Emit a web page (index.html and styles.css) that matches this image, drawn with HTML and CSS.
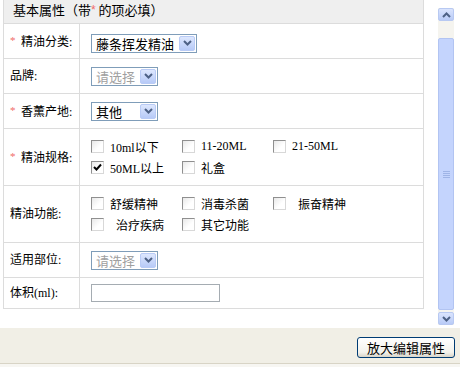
FILE: index.html
```html
<!DOCTYPE html>
<html>

<head>
	<title>基本属性</title>
	<link rel="stylesheet" href="styles.css">
</head>

<body>
	<div class="panel">
		<div class="sheet">
			<table class="form">
				<colgroup>
					<col class="c1">
					<col>
				</colgroup>
				<tr class="head">
					<td colspan="2">基本属性（带<span class="req-h">*</span> 的项必填）</td>
				</tr>
				<tr class="row">
					<td class="label"><span class="req">*</span>精油分类:</td>
					<td class="value push">
						<div class="select wide"><span class="val">藤条挥发精油</span><span class="arrow"><svg width="9" height="6" viewBox="0 0 9 6"><polyline points="1,1 4.5,4.5 8,1" fill="none" stroke="#4d6185" stroke-width="2"/></svg></span></div>
					</td>
				</tr>
				<tr class="row">
					<td class="label">品牌:</td>
					<td class="value">
						<div class="select narrow"><span class="val muted">请选择</span><span class="arrow"><svg width="9" height="6" viewBox="0 0 9 6"><polyline points="1,1 4.5,4.5 8,1" fill="none" stroke="#4d6185" stroke-width="2"/></svg></span></div>
					</td>
				</tr>
				<tr class="row">
					<td class="label"><span class="req">*</span>香薰产地:</td>
					<td class="value">
						<div class="select narrow"><span class="val">其他</span><span class="arrow"><svg width="9" height="6" viewBox="0 0 9 6"><polyline points="1,1 4.5,4.5 8,1" fill="none" stroke="#4d6185" stroke-width="2"/></svg></span></div>
					</td>
				</tr>
				<tr class="row tall">
					<td class="label"><span class="req">*</span>精油规格:</td>
					<td class="value">
						<div class="checks">
							<label class="check"><span class="box"></span>10ml以下</label>
							<label class="check"><span class="box"></span>11-20ML</label>
							<label class="check"><span class="box"></span>21-50ML</label>
							<label class="check"><span class="box on"><svg width="11" height="11" viewBox="0 0 11 11"><polyline points="2,5 4.5,7.5 9,2.5" fill="none" stroke="#000" stroke-width="2"/></svg></span>50ML以上</label>
							<label class="check"><span class="box"></span>礼盒</label>
						</div>
					</td>
				</tr>
				<tr class="row tall">
					<td class="label">精油功能:</td>
					<td class="value">
						<div class="checks">
							<label class="check"><span class="box"></span>舒缓精神</label>
							<label class="check"><span class="box"></span>消毒杀菌</label>
							<label class="check"><span class="box"></span>&nbsp;&nbsp;振奋精神</label>
							<label class="check"><span class="box"></span>&nbsp;&nbsp;治疗疾病</label>
							<label class="check"><span class="box"></span>其它功能</label>
						</div>
					</td>
				</tr>
				<tr class="row">
					<td class="label">适用部位:</td>
					<td class="value">
						<div class="select narrow"><span class="val muted">请选择</span><span class="arrow"><svg width="9" height="6" viewBox="0 0 9 6"><polyline points="1,1 4.5,4.5 8,1" fill="none" stroke="#4d6185" stroke-width="2"/></svg></span></div>
					</td>
				</tr>
				<tr class="row short">
					<td class="label">体积(ml):</td>
					<td class="value">
						<input type="text" class="text">
					</td>
				</tr>
			</table>
		</div>
		<div class="scroll">
			<div class="sb-btn"><svg width="9" height="6" viewBox="0 0 9 6"><polyline points="1,5 4.5,1.5 8,5" fill="none" stroke="#4d6185" stroke-width="2"/></svg></div>
			<div class="sb-track"></div>
			<div class="sb-thumb"><svg width="7" height="7" viewBox="0 0 7 7"><path d="M0 0.5H7M0 2.5H7M0 4.5H7M0 6.5H7" stroke="#9fb4e6" stroke-width="1"/></svg></div>
			<div class="sb-gap"></div>
			<div class="sb-btn"><svg width="9" height="6" viewBox="0 0 9 6"><polyline points="1,1 4.5,4.5 8,1" fill="none" stroke="#4d6185" stroke-width="2"/></svg></div>
		</div>
	</div>
	<div class="footer">
		<button class="btn">放大编辑属性</button>
	</div>
</body>

</html>
```

FILE: styles.css
```css
* {
	margin: 0px;
	padding: 0px;
	box-sizing: border-box;
}

body {
	background: #f7f6f2;
	font-family: "Liberation Serif", "Noto Sans CJK SC", serif;
	font-size: 12px;
	color: #000;
	width: 460px;
	height: 367px;
	overflow: hidden;
}

.panel {
	display: flex;
	height: 328px;
	padding-left: 3px;
	overflow: hidden;
	background: #fff;
}

.sheet {
	width: 421px;
	margin-top: -6px;
	flex: none;
}

.form {
	border-collapse: collapse;
	width: 421px;
	table-layout: fixed;
}

.c1 {
	width: 76px;
}

.form td {
	border: 1px solid #dcdcdc;
	padding: 0;
	vertical-align: middle;
}

.form .head td {
	height: 29px;
	background: #efefef;
	padding: 1px 0 0 9px;
	font-family: "Noto Sans CJK SC", sans-serif;
	font-size: 13px;
	line-height: 15px;
}

.req-h {
	display: inline-block;
	color: #f06a6a;
	font-family: "Liberation Sans", sans-serif;
	font-size: 12px;
	line-height: 12px;
	vertical-align: 1px;
}

.row td {
	height: 35px;
}

.tall td {
	height: 57px;
}

.short td {
	height: 31px;
}

.label {
	padding-left: 6px !important;
	font-size: 12px;
	line-height: 14px;
	white-space: nowrap;
}

.req {
	display: inline-block;
	width: 11px;
	color: #f06a6a;
	font-size: 11px;
	vertical-align: 2px;
}

.value {
	padding-left: 11px !important;
}

.push {
	padding-top: 4px !important;
}

.select {
	display: inline-flex;
	align-items: center;
	justify-content: space-between;
	height: 19px;
	border: 1px solid #7f9db9;
	background: #fff;
	padding: 0 1px 0 4px;
	font-family: "Noto Sans CJK SC", sans-serif;
	font-size: 13px;
	vertical-align: middle;
}

.wide {
	width: 106px;
}

.narrow {
	width: 67px;
}

.val {
	line-height: 17px;
}

.muted {
	color: #a0a0a0;
}

.arrow {
	width: 16px;
	height: 15px;
	border: 1px solid #b9cbf6;
	border-radius: 2px;
	background: linear-gradient(#dde7fe, #b7caf7);
	display: flex;
	align-items: center;
	justify-content: center;
}

.checks {
	display: flex;
	flex-wrap: wrap;
	width: 273px;
}

.check {
	width: 91px;
	height: 21px;
	display: flex;
	align-items: center;
	white-space: pre;
}

.box {
	width: 13px;
	height: 13px;
	border: 1px solid;
	border-color: #8f8f8f #d8d8d8 #d8d8d8 #8f8f8f;
	background: linear-gradient(135deg, #e8e8e8, #fff 60%);
	margin-right: 6px;
	flex: none;
	display: flex;
	align-items: center;
	justify-content: center;
}

.text {
	display: block;
	width: 129px;
	height: 18px;
	border: 1px solid #a5acb2;
	background: #fff;
}

.scroll {
	width: 16px;
	height: 317px;
	margin: 8px 0 0 14px;
	display: flex;
	flex-direction: column;
	background: #f5f4ef;
	flex: none;
}

.sb-btn {
	height: 13px;
	border: 1px solid #b8c9f2;
	border-radius: 2px;
	background: linear-gradient(#dae4fd, #b9cbf7);
	display: flex;
	align-items: center;
	justify-content: center;
}

.sb-track {
	height: 17px;
}

.sb-thumb {
	height: 272px;
	border: 1px solid #b2c4f2;
	border-radius: 2px;
	background: #c4d4fd;
	display: flex;
	align-items: center;
	justify-content: center;
}

.sb-gap {
	height: 2px;
}

.footer {
	height: 36px;
	background: #f1efe6;
	border-bottom: 1px solid #d8d4c6;
	display: flex;
	justify-content: flex-end;
	align-items: flex-start;
	padding: 9px 5px 0 0;
}

.btn {
	width: 98px;
	height: 21px;
	border: 1px solid #003c74;
	border-radius: 3px;
	background: linear-gradient(#fff, #f3f2ec 75%, #d9d4c8);
	font-family: "Noto Sans CJK SC", sans-serif;
	font-size: 13px;
	line-height: 19px;
	color: #000;
}
```
